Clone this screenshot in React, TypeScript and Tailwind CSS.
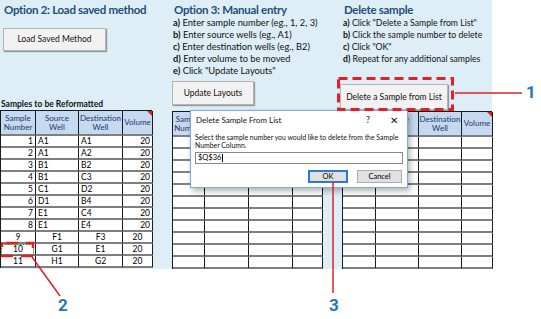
import type { ReactNode } from "react";

type Row = { n: string; src: string; dst: string; vol: string; center?: boolean };

const rows: Row[] = [
  { n: "1", src: "A1", dst: "A1", vol: "20" },
  { n: "2", src: "A1", dst: "A2", vol: "20" },
  { n: "3", src: "B1", dst: "B2", vol: "20" },
  { n: "4", src: "B1", dst: "C3", vol: "20" },
  { n: "5", src: "C1", dst: "D2", vol: "20" },
  { n: "6", src: "D1", dst: "B4", vol: "20" },
  { n: "7", src: "E1", dst: "C4", vol: "20" },
  { n: "8", src: "E1", dst: "E4", vol: "20" },
  { n: "9", src: "F1", dst: "F3", vol: "20", center: true },
  { n: "10", src: "G1", dst: "E1", vol: "20", center: true },
  { n: "11", src: "H1", dst: "G2", vol: "20", center: true },
];

const emptyRows: Row[] = Array.from({ length: 11 }, () => ({ n: "", src: "", dst: "", vol: "" }));

function Cell({ children, align = "left" }: { children?: ReactNode; align?: "left" | "right" | "center" }) {
  const a = align === "right" ? "justify-end pr-[2px]" : align === "center" ? "justify-center" : "justify-start pl-[2px]";
  return (
    <div className={`flex h-[12px] items-center border-r border-b-2 border-r-[#1a1a1a] border-b-[#7f7f7f] bg-white text-[8.5px] leading-none ${a}`}>
      {children}
    </div>
  );
}

function Head({ children, corner = false }: { children: ReactNode; corner?: boolean }) {
  return (
    <div className="relative flex h-[25px] items-center justify-center border-r border-b-2 border-r-[#1a1a1a] border-b-[#7f7f7f] bg-[#c5d9f1] text-center text-[8px] leading-[9px] text-[#1f3864]">
      {children}
      {corner && <span className="absolute top-0 right-0 h-0 w-0 border-t-[5px] border-l-[5px] border-t-[#e0201a] border-l-transparent" />}
    </div>
  );
}

function SampleTable({ data, cols }: { data: Row[]; cols: string }) {
  return (
    <div className={`grid border-t border-l border-[#1a1a1a] ${cols}`}>
      <Head>Sample<br />Number</Head>
      <Head>Source<br />Well</Head>
      <Head>Destination<br />Well</Head>
      <Head corner>Volume</Head>
      {data.map((r, i) => (
        <div key={i} className="contents">
          <Cell align={r.center ? "center" : "right"}>{r.n}</Cell>
          <Cell align={r.center ? "center" : "left"}>{r.src}</Cell>
          <Cell align={r.center ? "center" : "left"}>{r.dst}</Cell>
          <Cell align={r.center ? "center" : "right"}>{r.vol}</Cell>
        </div>
      ))}
    </div>
  );
}

function XlButton({ label, className }: { label: string; className: string }) {
  return (
    <div
      className={`flex items-center justify-center border border-[#b4b4b4] bg-[#f2f2f2] text-[8.5px] text-[#111] shadow-[1px_1px_1px_rgba(0,0,0,0.35)] ${className}`}
    >
      {label}
    </div>
  );
}

function Step({ k, text, small = false }: { k: string; text: string; small?: boolean }) {
  return (
    <div className={`h-[12px] leading-[12px] whitespace-nowrap text-[#111] ${small ? "text-[8.7px]" : "text-[9.3px]"}`}>
      <b>{k}</b> {text}
    </div>
  );
}

export default function App() {
  return (
    <div className="relative h-[319px] w-[541px] overflow-hidden bg-white font-['Lato','Open_Sans',sans-serif]">
      <div className="grid h-[269px] w-[492px] grid-cols-[152px_150px_150px] gap-x-[20px] bg-[#ddeef6]">
        {/* Option 2 */}
        <div className="flex flex-col">
          <div className="flex h-[110px] flex-col">
            <div className="pt-[3px] pl-[4px] text-[11.5px] leading-[14px] font-bold tracking-[-0.3px] text-[#1f4e79]">
              Option 2: Load saved method
            </div>
            <XlButton label="Load Saved Method" className="mt-[11px] ml-[3px] h-[23px] w-[103px]" />
            <div className="mt-auto pb-[1px] pl-[1px] text-[8.5px] leading-[10px] font-bold text-[#111]">
              Samples to be Reformatted
            </div>
          </div>
          <SampleTable data={rows} cols="grid-cols-[35px_43px_44px_30px]" />
        </div>

        {/* Option 3 */}
        <div className="flex flex-col">
          <div className="flex h-[111px] flex-col">
            <div className="pt-[3px] pl-[2px] text-[11.5px] leading-[14px] font-bold tracking-[-0.3px] text-[#1f4e79]">
              Option 3: Manual entry
            </div>
            <div className="pl-[1px]">
              <Step k="a)" text="Enter sample number (eg., 1, 2, 3)" />
              <Step k="b)" text="Enter source wells (eg., A1)" />
              <Step k="c)" text="Enter destination wells (eg., B2)" />
              <Step k="d)" text="Enter volume to be moved" />
              <Step k="e)" text='Click "Update Layouts"' />
            </div>
            <XlButton label="Update Layouts" className="mt-[4px] h-[24px] w-[82px]" />
          </div>
          <SampleTable data={emptyRows} cols="grid-cols-[32px_44px_44px_30px]" />
        </div>

        {/* Delete sample */}
        <div className="flex flex-col">
          <div className="flex h-[111px] flex-col">
            <div className="pt-[3px] pl-[2px] text-[11.5px] leading-[14px] font-bold tracking-[-0.3px] text-[#1f4e79]">
              Delete sample
            </div>
            <div className="pl-[1px]">
              <Step small k="a)" text='Click "Delete a Sample from List"' />
              <Step small k="b)" text="Click the sample number to delete" />
              <Step small k="c)" text='Click "OK"' />
              <Step small k="d)" text="Repeat for any additional samples" />
            </div>
            <XlButton label="Delete a Sample from List" className="mt-[19px] -ml-[2px] h-[26px] w-[108px]" />
          </div>
          <SampleTable data={emptyRows} cols="grid-cols-[33px_43px_43px_31px]" />
        </div>
      </div>

      {/* Dialog */}
      <div className="absolute top-[110px] left-[190px] flex h-[78px] w-[218px] flex-col border border-[#7fa9d8] bg-white px-[4px] shadow-[2px_3px_6px_rgba(0,0,0,0.3)]">
        <div className="flex h-[18px] items-center text-[8px] text-[#111]">
          <span className="pl-[1px]">Delete Sample From List</span>
          <span className="ml-auto text-[9px]">?</span>
          <span className="mr-[5px] ml-[20px] text-[10px] leading-none">✕</span>
        </div>
        <div className="mt-[4px] text-[6.9px] leading-[8px] whitespace-nowrap text-[#111]">
          Select the sample number you would like to delete from the Sample
          <br />
          Number Column.
        </div>
        <div className="mt-[3px] flex h-[12px] items-center border border-[#8a8a8a] pl-[2px] text-[7.5px]">
          $Q$36<span className="ml-[1px] h-[8px] w-px bg-black" />
        </div>
        <div className="mt-[6px] flex justify-end gap-[9px] pr-[1px]">
          <div className="flex h-[13px] w-[40px] items-center justify-center border-2 border-[#2a7ad5] bg-[#e1e1e1] text-[7.5px]">OK</div>
          <div className="flex h-[13px] w-[45px] items-center justify-center border border-[#adadad] bg-[#e1e1e1] text-[7.5px]">Cancel</div>
        </div>
      </div>

      {/* Annotations */}
      <svg className="pointer-events-none absolute inset-0" width="541" height="319" viewBox="0 0 541 319">
        <rect x="338.5" y="78.5" width="114" height="31" fill="none" stroke="#e3202a" strokeWidth="3" strokeDasharray="9 5" />
        <line x1="455" y1="93" x2="522" y2="93" stroke="#e3202a" strokeWidth="1.5" />
        <rect x="1.5" y="244.5" width="32" height="11" fill="none" stroke="#2f8a3a" strokeWidth="1" strokeDasharray="2 1" />
        <rect x="2" y="243" width="31" height="13" fill="none" stroke="#e3202a" strokeWidth="2.5" strokeDasharray="12 8" strokeDashoffset="-4" />
        <line x1="32" y1="257" x2="60" y2="296" stroke="#e3202a" strokeWidth="1.5" />
        <line x1="333" y1="182" x2="333" y2="293" stroke="#e3202a" strokeWidth="1.5" />
      </svg>
      <span className="absolute top-[82px] left-[526px] font-['Roboto',sans-serif] text-[17px] leading-[20px] font-bold text-[#2577b8]">1</span>
      <span className="absolute top-[295px] left-[58px] font-['Roboto',sans-serif] text-[17px] leading-[20px] font-bold text-[#2577b8]">2</span>
      <span className="absolute top-[295px] left-[329px] font-['Roboto',sans-serif] text-[17px] leading-[20px] font-bold text-[#2577b8]">3</span>
    </div>
  );
}
